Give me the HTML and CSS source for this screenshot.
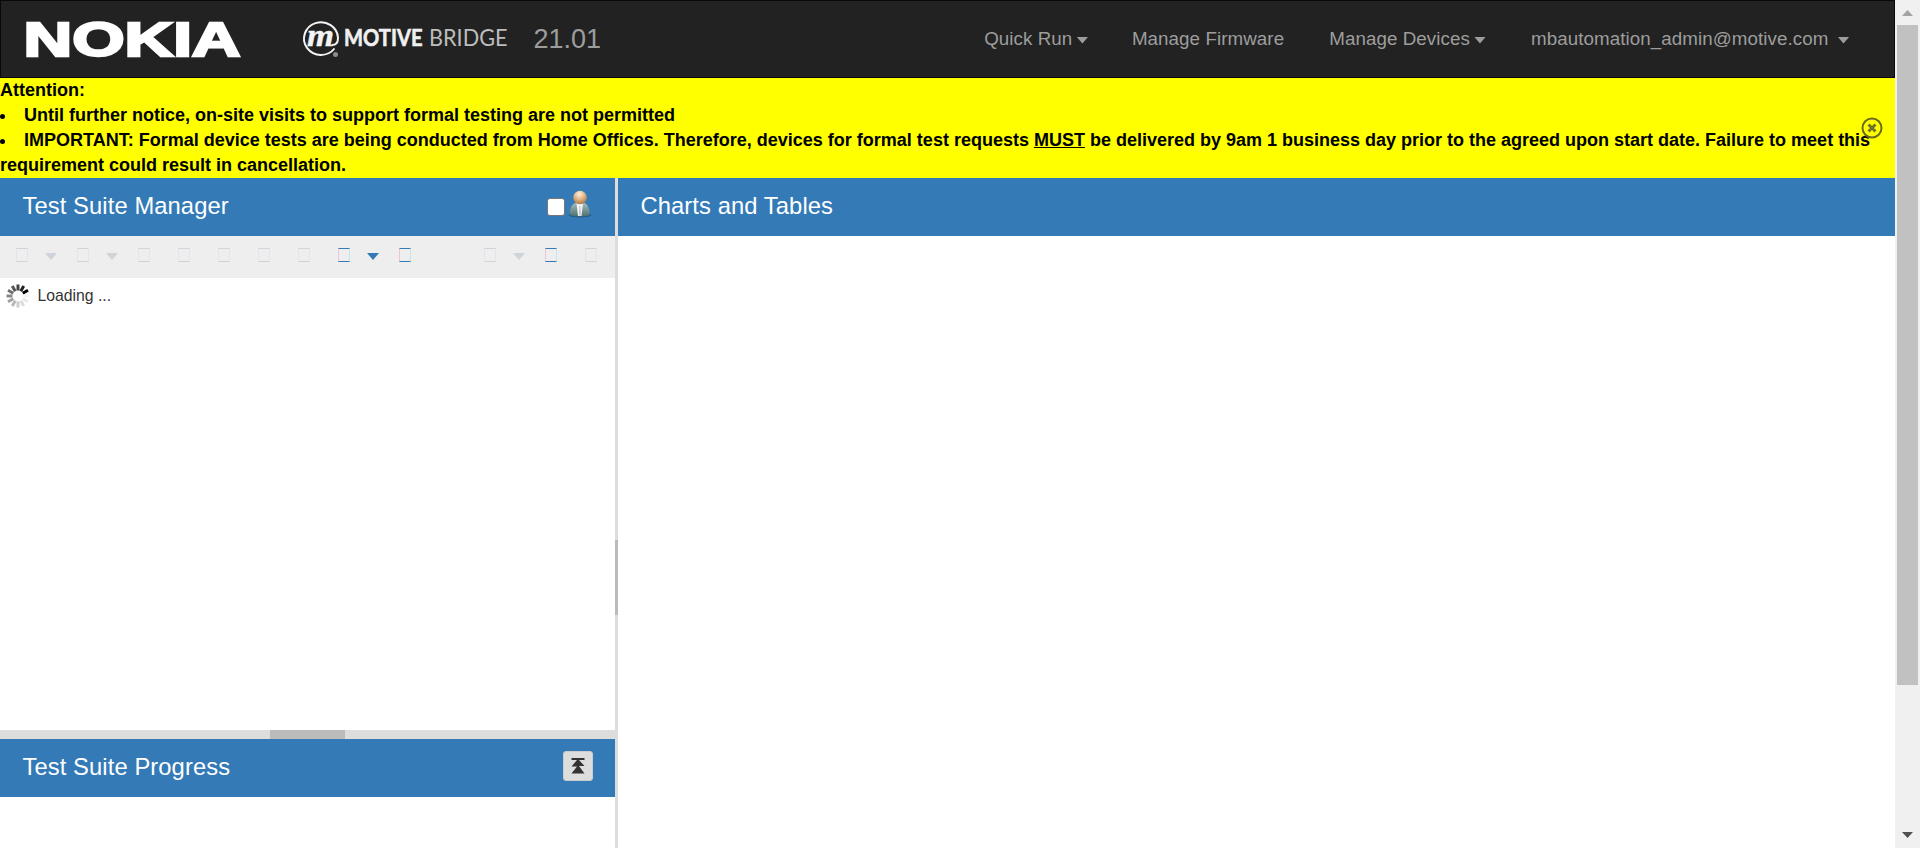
FILE: index.html
```html
<!DOCTYPE html>
<html lang="en">
<head>
<meta charset="utf-8">
<title>Motive Bridge</title>
<link rel="stylesheet" href="styles.css">
</head>
<body>
<div class="page">
  <header class="navbar">
    <svg class="nokia" width="227" height="72" viewBox="-5 -16 227 72" role="img" aria-label="Nokia">
      <text class="nokia-text" x="-2.500" y="36.500" textLength="217" lengthAdjust="spacingAndGlyphs">NOKIA</text>
    </svg>
    <svg class="motive" width="218" height="62" viewBox="-5 -10 218 62" role="img" aria-label="Motive Bridge">
      <path d="M31.500 28.500A17 16.300 0 1 1 35 18Q35 25 29 25" fill="none" stroke="#f4f4f4" stroke-width="2"/>
      <text class="motive-m" x="4" y="26" textLength="27" lengthAdjust="spacingAndGlyphs">m</text>
      <circle cx="32.500" cy="34.500" r="2.500" fill="#8b8b8b"/>
      <text class="motive-bold" x="41" y="26" textLength="78.500" lengthAdjust="spacingAndGlyphs">MOTIVE</text>
      <text class="motive-light" x="126" y="25.500" textLength="78.500" lengthAdjust="spacingAndGlyphs">BRIDGE</text>
    </svg>
    <span class="version">21.01</span>
    <nav class="menu">
      <a>Quick Run<i class="caret tight"></i></a>
      <a>Manage Firmware</a>
      <a>Manage Devices<i class="caret tight"></i></a>
      <a>mbautomation_admin@motive.com<i class="caret wide"></i></a>
    </nav>
  </header>

  <section class="notice">
    <div>Attention:</div>
    <ul>
      <li>Until further notice, on-site visits to support formal testing are not permitted</li>
      <li>IMPORTANT: Formal device tests are being conducted from Home Offices. Therefore, devices for formal test requests <u>MUST</u> be delivered by 9am 1 business day prior to the agreed upon start date. Failure to meet this<br>requirement could result in cancellation.</li>
    </ul>
    <svg class="close" width="22" height="22" viewBox="0 0 22 22">
      <circle cx="11" cy="11" r="9.500" fill="none" stroke="#6b6b1c" stroke-width="2"/>
      <path d="M7.500 7.500l7 7m0-7l-7 7" stroke="#72722b" stroke-width="3"/>
    </svg>
  </section>

  <main class="workspace">
    <div class="left">
      <div class="heading">
        <h2>Test Suite Manager</h2>
        <span class="check"></span>
        <svg class="user" width="24" height="28" viewBox="0 0 24 28">
          <defs>
            <radialGradient id="skin" cx=".45" cy=".25" r=".8"><stop offset="0" stop-color="#fff0dd"/><stop offset=".5" stop-color="#dfb184"/><stop offset="1" stop-color="#a66e3d"/></radialGradient>
            <linearGradient id="coat" x1="0" x2="0" y1="0" y2="1"><stop offset="0" stop-color="#a9bcb9"/><stop offset="1" stop-color="#4b7170"/></linearGradient>
          </defs>
          <ellipse cx="12" cy="25" rx="11.500" ry="2.500" fill="#23598a"/>
          <path d="M1.500 25Q2 13 9 12.500H15Q21 13 22 25Q12 28 1.500 25Z" fill="url(#coat)"/>
          <path d="M8.500 13.500h6.500L13.500 26h-3.500Z" fill="#f2f3f6"/>
          <path d="M11.300 16h1.200l.6 9.500h-2.200Z" fill="#c5cad4"/>
          <circle cx="12" cy="7.500" r="6.800" fill="url(#skin)"/>
        </svg>
      </div>
      <div class="toolbar">
        <i class="box"></i><i class="caret drop"></i>
        <i class="box"></i><i class="caret drop"></i>
        <i class="box"></i><i class="box"></i><i class="box"></i><i class="box"></i><i class="box"></i>
        <i class="box on"></i><i class="caret drop on"></i>
        <i class="box on"></i>
        <i class="box end"></i><i class="caret drop"></i>
        <i class="box on"></i><i class="box"></i>
      </div>
      <div class="loading">
        <svg width="24" height="24" viewBox="-12 -12 24 24" stroke-width="3">
          <path d="M0-5.500V-11.500" stroke="#444"/>
          <path d="M0-5.500V-11.500" stroke="#222" transform="rotate(30)"/>
          <path d="M0-5.500V-11.500" stroke="#000" transform="rotate(60)"/>
          <path d="M0-5.500V-11.500" stroke="#f4f4f4" transform="rotate(90)"/>
          <path d="M0-5.500V-11.500" stroke="#eaeaea" transform="rotate(120)"/>
          <path d="M0-5.500V-11.500" stroke="#ddd" transform="rotate(150)"/>
          <path d="M0-5.500V-11.500" stroke="#ccc" transform="rotate(180)"/>
          <path d="M0-5.500V-11.500" stroke="#b8b8b8" transform="rotate(210)"/>
          <path d="M0-5.500V-11.500" stroke="#a0a0a0" transform="rotate(240)"/>
          <path d="M0-5.500V-11.500" stroke="#888" transform="rotate(270)"/>
          <path d="M0-5.500V-11.500" stroke="#707070" transform="rotate(300)"/>
          <path d="M0-5.500V-11.500" stroke="#555" transform="rotate(330)"/>
        </svg>
        <span>Loading ...</span>
      </div>
      <div class="hsplit"><div class="hgrip"></div></div>
      <div class="heading">
        <h2>Test Suite Progress</h2>
        <span class="collapse">
          <svg width="14" height="16" viewBox="0 0 14 16"><path d="M.5 0h13v2H8l5.500 6H8l5.500 7.500H.5L6 8.500H.5L6 2H.5Z" fill="#333"/></svg>
        </span>
      </div>
    </div>
    <div class="vsplit"><div class="vgrip"></div></div>
    <div class="right">
      <div class="heading"><h2>Charts and Tables</h2></div>
    </div>
  </main>
</div>
<aside class="scrollbar">
  <svg width="11" height="6" viewBox="0 0 11 6"><path d="M0 6L5.500 0L11 6Z" fill="#a3a3a3"/></svg>
  <div class="thumb"></div>
  <svg class="down" width="11" height="6" viewBox="0 0 11 6"><path d="M0 0H11L5.500 6Z" fill="#505050"/></svg>
</aside>
</body>
</html>
```
FILE: styles.css
```css
* { box-sizing: border-box; }
body {
  margin: 0;
  height: 848px;
  display: flex;
  overflow: hidden;
  background: #fff;
  color: #333;
  font-family: "Liberation Sans", Arial, sans-serif;
}
.page { width: 1895px; height: 848px; display: flex; flex-direction: column; }

.navbar {
  height: 78px;
  flex: none;
  display: flex;
  align-items: center;
  padding: 0 22px 0 20px;
  background: #222;
  border: 1px solid #080808;
  color: #9d9d9d;
}
.nokia-text { font: bold 48px "Liberation Sans", sans-serif; fill: #fff; stroke: #fff; stroke-width: 2.4px; }
.motive { margin-left: 49.5px; margin-top: 4px; }
.motive-m { font: italic bold 32px "Liberation Serif", serif; fill: #f4f4f4; stroke: #f4f4f4; stroke-width: .4px; }
.motive-bold { font: bold 23px Lato, sans-serif; fill: #f0f0f0; stroke: #f0f0f0; stroke-width: .6px; }
.motive-light { font: 23px Lato, sans-serif; fill: #bdbdbd; }
.version { margin-left: 18px; font-size: 27px; line-height: 40px; }
.menu { margin: -2px 0 0 auto; display: flex; }
.menu a { padding: 0 22.5px; font-size: 18.75px; letter-spacing: .08px; line-height: 25px; white-space: nowrap; display: flex; align-items: center; }
.menu a:first-child { margin-right: -1.5px; }
.caret {
  display: block;
  flex: none;
  width: 12px;
  height: 7px;
  background: currentColor;
  clip-path: polygon(0 0, 100% 0, 50% 100%);
}
.tight { margin: 4px 0 0 4px; }
.wide { margin: 4px 0 0 9px; }

.notice {
  position: relative;
  height: 100px;
  flex: none;
  background: #ff0;
  color: #000;
  font-size: 18px;
  font-weight: bold;
  line-height: 25px;
  white-space: nowrap;
}
.notice ul { margin: 0; padding: 0; list-style: none; }
.notice li::before {
  content: "";
  display: inline-block;
  width: 5px;
  height: 5px;
  margin: 0 19px 2px 0;
  border-radius: 50%;
  background: #000;
}
.close { position: absolute; right: 12px; top: 39px; }

.workspace { flex: 1; min-height: 0; display: flex; }
.left { width: 615px; display: flex; flex-direction: column; }
.heading {
  height: 58px;
  flex: none;
  display: flex;
  align-items: center;
  padding: 0 23px 2px 22.5px;
  background: #337ab7;
  color: #fff;
}
.heading h2 { margin: 0; flex: 1; font-size: 23.75px; letter-spacing: .09px; font-weight: normal; line-height: 28px; }
.check { width: 18px; height: 18px; margin: 2px 3px 0 0; background: #fff; border: 1px solid #767676; border-radius: 3px; }
.user { margin-top: -4px; }
.toolbar {
  height: 42px;
  flex: none;
  display: flex;
  align-items: flex-start;
  padding: 12px 18px 0 16px;
  background: #eee;
  color: #ced4da;
}
.box {
  flex: none;
  width: 12px;
  height: 14px;
  margin-right: 28px;
  border: 1px solid #e4e5e8;
  border-top-color: currentColor;
  border-bottom-color: currentColor;
}
.box:has(+ .drop) { margin-right: 17px; }
.box:last-child { margin-right: 0; }
.drop { margin: 5px 20px 0 0; }
.toolbar .end { margin-left: auto; }
.on { color: #337ab7; }
.box.on { border-left-color: #edc5d7; border-right-color: #c3e8e8; }
.loading { flex: 1; display: flex; align-items: flex-start; padding: 6px 0 0 6px; }
.loading span { margin: -1px 0 0 7.5px; font-size: 15.75px; line-height: 25px; }
.hsplit { height: 9px; flex: none; background: #ddd; }
.hgrip { width: 75px; height: 9px; margin-left: 270px; background: #bbb; }
.left .heading:last-child { margin-bottom: 51px; }
.collapse {
  width: 30px;
  height: 30px;
  display: flex;
  align-items: center;
  justify-content: center;
  margin: -2px -1px 0 0;
  background: #ddd;
  border: 1px solid #ccc;
  border-radius: 3px;
}
.vsplit { width: 3px; flex: none; background: #ddd; padding-top: 362px; }
.vgrip { height: 75px; background: #bbb; }
.right { flex: 1; }

.scrollbar {
  width: 25px;
  height: 848px;
  display: flex;
  flex-direction: column;
  padding: 10px 2px;
  background: #f0f0f0;
}
.scrollbar svg { flex: none; align-self: center; }
.thumb { height: 660px; margin-top: 9px; background: #c1c1c1; }
.down { margin-top: auto; }
```
